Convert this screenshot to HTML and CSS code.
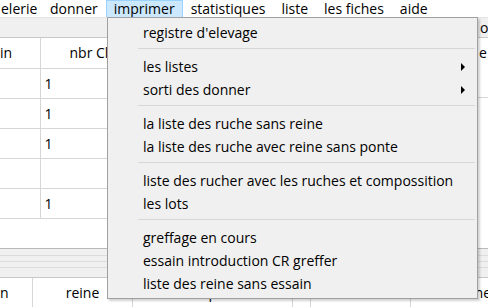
FILE: index.html
```html
<!DOCTYPE html>
<html>
<head lang="fr">
    <meta charset="UTF-8">
    <title>imprimer</title>
    <link rel="stylesheet" href="styles.css">
</head>
<body>
<div class="app">
    <div class="menubar">
        <span class="mi first">elerie</span>
        <span class="mi">donner</span>
        <span class="mi active">imprimer</span>
        <span class="mi">statistiques</span>
        <span class="mi">liste</span>
        <span class="mi">les fiches</span>
        <span class="mi">aide</span>
    </div>

    <div class="top">
        <div class="grid-left">
            <div class="band"></div>
            <table class="grid" cellpadding="0" cellspacing="0">
                <thead>
                <tr>
                    <th class="c1">in</th>
                    <th class="c2">nbr Cl</th>
                </tr>
                </thead>
                <tbody>
                <tr><td class="c1"></td><td class="c2">1</td></tr>
                <tr><td class="c1"></td><td class="c2">1</td></tr>
                <tr><td class="c1"></td><td class="c2">1</td></tr>
                <tr><td class="c1"></td><td class="c2"></td></tr>
                <tr><td class="c1"></td><td class="c2">1</td></tr>
                </tbody>
            </table>
        </div>
        <div class="grid-right">
            <div class="band">o</div>
            <div class="rhead">e</div>
        </div>
    </div>

    <div class="splitter">
        <div class="sl"></div>
        <div class="sl"></div>
        <div class="sl"></div>
    </div>

    <div class="bottom-head">
        <div class="bh b1">n</div>
        <div class="bh b2">reine</div>
        <div class="bh b3">d'arret de pt</div>
        <div class="bh b4"></div>
        <div class="bh b5">umero de ruch</div>
        <div class="bh b6">reine mer</div>
    </div>

    <!-- menu deroulant imprimer -->
    <div class="dropdown">
        <div class="item">registre d'elevage</div>
        <div class="sep"></div>
        <div class="item">les listes<i class="arrow"></i></div>
        <div class="item">sorti des donner<i class="arrow"></i></div>
        <div class="sep"></div>
        <div class="item">la liste des ruche sans reine</div>
        <div class="item">la liste des ruche avec reine sans ponte</div>
        <div class="sep"></div>
        <div class="item">liste des rucher avec les ruches et compossition</div>
        <div class="item">les lots</div>
        <div class="sep"></div>
        <div class="item">greffage en cours</div>
        <div class="item">essain introduction CR greffer</div>
        <div class="item">liste des reine sans essain</div>
    </div>
</div>
</body>
</html>
```

FILE: styles.css
```css
* {
    margin: 0;
    padding: 0;
    box-sizing: border-box;
}

body {
    font-family: "Open Sans", "Noto Sans", sans-serif;
    font-size: 14px;
    color: #000;
    background: #fff;
    overflow: hidden;
}

.app {
    position: relative;
    width: 488px;
    height: 307px;
    overflow: hidden;
}

/* barre de menu */
.menubar {
    display: flex;
    height: 17px;
    background: #fff;
    white-space: nowrap;
}

.mi {
    padding: 0 7px;
    line-height: 15px;
    border: 1px solid transparent;
    border-bottom: 0;
}

.mi.first {
    padding-left: 0;
    width: 42px;
}

.mi.active {
    background: #cce8ff;
    border-color: #99d1ff;
}

/* grilles du haut */
.top {
    display: flex;
    height: 231px;
}

.grid-left {
    width: 478px;
}

.grid-right {
    flex: 1;
    overflow: hidden;
}

.band {
    height: 21px;
    background: #f0f0f0;
    border-top: 1px solid #e3e3e3;
    border-bottom: 1px solid #c8c8c8;
    line-height: 19px;
    white-space: nowrap;
}

.grid-right .band {
    padding-left: 2px;
}

.rhead {
    height: 60px;
    padding-left: 1px;
    line-height: 30px;
    border-bottom: 1px solid #d6d6d6;
}

.grid {
    width: 478px;
    border-collapse: collapse;
    table-layout: fixed;
}

.grid th,
.grid td {
    height: 30px;
    font-weight: normal;
    border-bottom: 1px solid #d6d6d6;
    white-space: nowrap;
    overflow: hidden;
    text-align: left;
}

.grid .c1 {
    width: 40px;
    border-right: 1px solid #d6d6d6;
}

.grid th.c2 {
    padding-left: 29px;
}

.grid td.c2 {
    padding-left: 4px;
}

/* separateur */
.splitter {
    height: 30px;
    background: #f0f0f0;
    border-top: 1px solid #b9b9b9;
    border-bottom: 1px solid #c8c8c8;
    padding-top: 6px;
}

.sl {
    height: 1px;
    margin-bottom: 5px;
    background: #dcdcdc;
}

/* entete grille du bas */
.bottom-head {
    display: flex;
    height: 29px;
    white-space: nowrap;
}

.bh {
    border-right: 1px solid #d6d6d6;
    line-height: 30px;
    overflow: hidden;
    flex-shrink: 0;
}

.b1 { width: 33px; }
.b2 { width: 100px; text-align: center; }
.b3 { width: 160px; padding-left: 8px; }
.b4 { width: 18px; }
.b5 { width: 100px; padding-left: 3px; }
.b6 { flex: 1; border-right: 0; padding-left: 22px; }

/* menu deroulant */
.dropdown {
    position: absolute;
    left: 107px;
    top: 17px;
    width: 371px;
    padding: 3px 0;
    background: #f0f0f0;
    border: 1px solid #a0a0a0;
    box-shadow: 2px 2px 2px rgba(0, 0, 0, 0.18);
}

.item {
    display: flex;
    align-items: center;
    justify-content: space-between;
    height: 23px;
    padding: 0 12px 0 35px;
    white-space: nowrap;
}

.sep {
    height: 1px;
    margin: 4px 2px 6px 30px;
    background: #d7d7d7;
}

.arrow {
    display: block;
    width: 0;
    height: 0;
    border-left: 4px solid #000;
    border-top: 4px solid transparent;
    border-bottom: 4px solid transparent;
}
```
